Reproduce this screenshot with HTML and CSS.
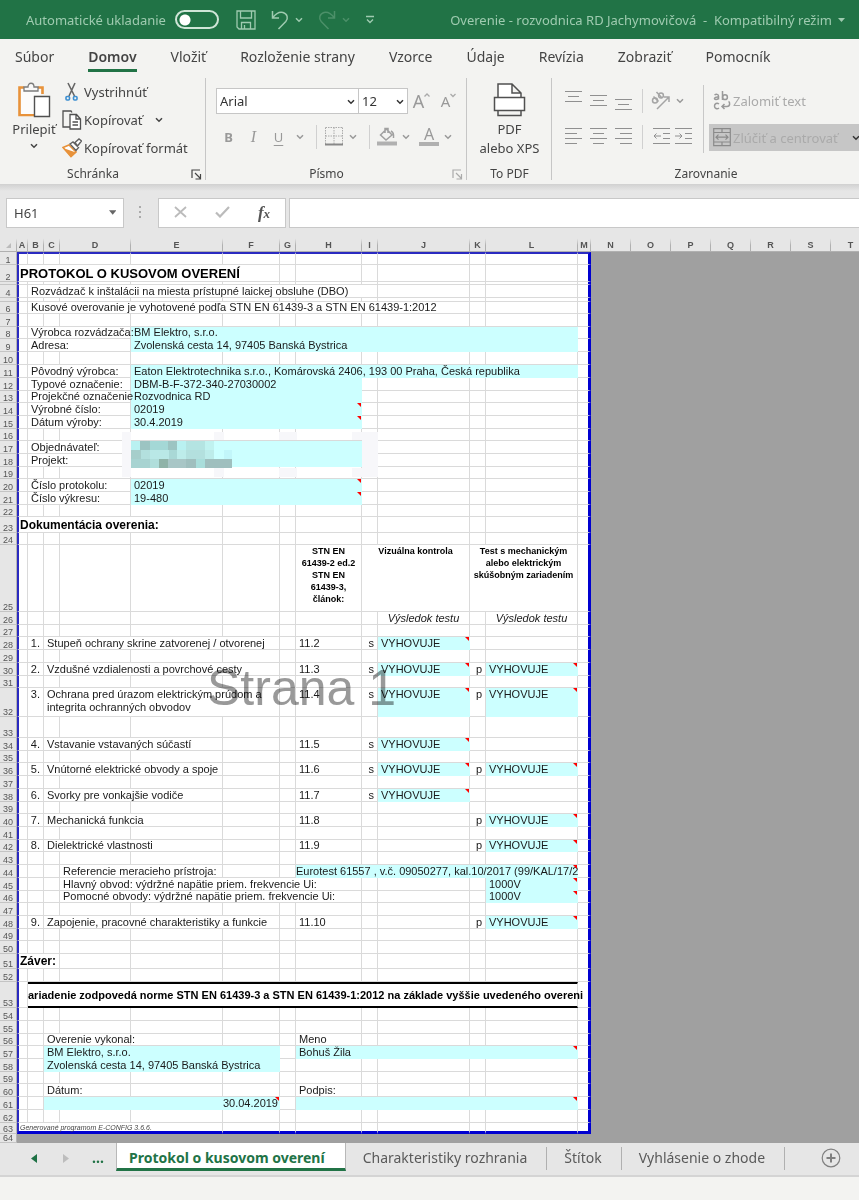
FILE: index.html
```html
<!DOCTYPE html>
<html lang="sk">
<head>
<meta charset="utf-8">
<title>Overenie - rozvodnica RD Jachymovičová</title>
<link rel="stylesheet" href="styles.css">
</head>
<body>
<svg class="defs" aria-hidden="true">
  <symbol id="chev" viewBox="0 0 8 6"><path d="M1 1.200l3 3 3-3" fill="none" stroke="currentColor" stroke-width="1.500"/></symbol>
  <symbol id="launch" viewBox="0 0 11 11"><path d="M1 9V1h8M4 4l5 5M9.500 5v5h-5" fill="none" stroke="currentColor" stroke-width="1.200"/></symbol>
</svg>

<header class="titlebar">
  <label class="autosave">Automatické ukladanie <input type="checkbox" class="switch"></label>
  <button class="tool" aria-label="Uložiť"><svg width="20" height="20" viewBox="0 0 20 20" fill="none" stroke="currentColor" stroke-width="1.300"><path d="M1 1h18v18H3l-2-2zM4.500 1v7h11V1M5.500 19v-6.500h9V19M8.500 19v-4"/></svg></button>
  <button class="tool" aria-label="Späť"><svg width="18" height="20" viewBox="0 0 18 20" fill="none" stroke="currentColor" stroke-width="1.500"><path d="M1.500 1v7H8M1.800 7.600C5 3.500 8.500 1.500 12 2.500c4.500 1.300 5.500 6 2.800 9L7.500 19"/></svg><svg width="8" height="6"><use href="#chev"/></svg></button>
  <button class="tool dim" aria-label="Znova"><svg width="18" height="20" viewBox="0 0 18 20" fill="none" stroke="currentColor" stroke-width="1.500"><path d="M16.500 1v7H10M16.200 7.600C13 3.500 9.500 1.500 6 2.500c-4.500 1.300-5.500 6-2.800 9l7.300 7.500"/></svg><svg width="8" height="6"><use href="#chev"/></svg></button>
  <button class="tool" aria-label="Prispôsobiť panel"><svg width="10" height="10" viewBox="0 0 10 10" fill="none" stroke="currentColor" stroke-width="1.400"><path d="M1 1.500h8M2 4.500l3 3 3-3"/></svg></button>
  <div class="doc">Overenie - rozvodnica RD Jachymovičová &nbsp;-&nbsp; Kompatibilný režim <svg width="7" height="4" viewBox="0 0 7 4"><path d="M0 0h7L3.500 4z" fill="currentColor"/></svg></div>
</header>

<nav class="tabs">
  <a href="#">Súbor</a><a href="#" class="on">Domov</a><a href="#">Vložiť</a><a href="#">Rozloženie strany</a><a href="#">Vzorce</a><a href="#">Údaje</a><a href="#">Revízia</a><a href="#">Zobraziť</a><a href="#">Pomocník</a>
</nav>

<section class="ribbon">
  <div class="group clip">
    <div class="body">
      <button class="big">
        <svg width="34" height="36" viewBox="0 0 34 36" fill="none"><path d="M7 5.500H2.500V33H17M21 5.500h4.500V12" stroke="#e8923a" stroke-width="2.600"/><path d="M4 7h20v6h-7v19H4z" fill="#fcfcfc"/><path d="M7 9V5h4c0-5 6-5 6 0h4v4z" fill="#f8f8f8" stroke="#7b7b7b" stroke-width="1.300"/><path d="M17.500 14.500h15v20h-15z" fill="#fff" stroke="#505050" stroke-width="1.400"/></svg>
        <span>Prilepiť</span>
        <svg width="8" height="6"><use href="#chev"/></svg>
      </button>
      <div class="stack">
        <button><svg width="20" height="20" viewBox="0 0 20 20" fill="none"><path d="M6 1l6.500 13M13 1L7 14" stroke="#666" stroke-width="1.600"/><rect x="4" y="14.500" width="3.500" height="3.500" rx="1" stroke="#3d8fd1" stroke-width="1.600"/><rect x="11.500" y="14.500" width="3.500" height="3.500" rx="1" stroke="#3d8fd1" stroke-width="1.600"/></svg>Vystrihnúť</button>
        <button><svg width="20" height="20" viewBox="0 0 20 20" fill="none" stroke="#505050" stroke-width="1.300"><path d="M8 17H1V1h8l1 1.500"/><path d="M8 4.500h6.500L18.500 9v10H8zM14 4.500V9h4.500M10.500 12h5.500M10.500 15h5.500" fill="#fff"/></svg>Kopírovať <svg class="after" width="8" height="6"><use href="#chev"/></svg></button>
        <button><svg width="20" height="20" viewBox="0 0 20 20"><path d="M1 9.500l6-2.500 7 7-5 4.500z" fill="#fff" stroke="#e8923a" stroke-width="1.600"/><path d="M1 10l13 4.500L9 19z" fill="#e8923a"/><path d="M8 6l3-2 5.500 5.500-2.500 3zM13 4.500L17 1l2.500 2-4 5z" fill="#fff" stroke="#606060" stroke-width="1.400"/></svg>Kopírovať formát</button>
      </div>
    </div>
    <div class="cap">Schránka<button class="launch" aria-label="Možnosti schránky"><svg width="11" height="11"><use href="#launch"/></svg></button></div>
  </div>

  <div class="group font">
    <div class="body rows">
      <div class="row">
        <span class="combo name"><select aria-label="Písmo"><option>Arial</option></select><svg width="8" height="6"><use href="#chev"/></svg></span>
        <span class="combo size"><select aria-label="Veľkosť písma"><option>12</option></select><svg width="8" height="6"><use href="#chev"/></svg></span>
        <button class="ib grow" aria-label="Zväčšiť písmo"><span class="a-lg">A</span><svg width="6" height="18" viewBox="0 0 6 18"><path d="M.5 4.500L3 2l2.500 2.500" fill="none" stroke="#aaa" stroke-width="1.300"/></svg></button>
        <button class="ib grow" aria-label="Zmenšiť písmo"><span class="a-sm">A</span><svg width="6" height="18" viewBox="0 0 6 18"><path d="M.5 2L3 4.500 5.500 2" fill="none" stroke="#aaa" stroke-width="1.300"/></svg></button>
      </div>
      <div class="row">
        <button class="ib b">B</button><button class="ib i">I</button><button class="ib u">U</button><button class="dd" aria-label="Štýly podčiarknutia"><svg width="8" height="6"><use href="#chev"/></svg></button>
        <i class="sep"></i>
        <button class="ic" aria-label="Orámovanie"><svg width="18" height="19" viewBox="0 0 18 19" fill="none" stroke="#aaa"><path d="M.5.500v17M17.500.500v17M.5.500h17M9 .5v17M.5 9h17" stroke-dasharray="1.500 1"/><path d="M0 17.500h18" stroke="#888" stroke-width="2"/></svg></button><button class="dd" aria-label="Typ orámovania"><svg width="8" height="6"><use href="#chev"/></svg></button>
        <i class="sep"></i>
        <button class="ic" aria-label="Farba výplne"><svg width="20" height="19" viewBox="0 0 20 19" fill="none"><path d="M3.500 8l6-6 5.500 6-6 5zM8 6V1.500h3V6M14 4c2 1 3 3 2.500 7" stroke="#a0a0a0" stroke-width="1.500"/><path d="M0 14.500h20v4H0z" fill="#b0b0b0"/></svg></button><button class="dd" aria-label="Farby výplne"><svg width="8" height="6"><use href="#chev"/></svg></button>
        <button class="ic color" aria-label="Farba písma"><span>A</span></button><button class="dd" aria-label="Farby písma"><svg width="8" height="6"><use href="#chev"/></svg></button>
      </div>
    </div>
    <div class="cap">Písmo<button class="launch dim" aria-label="Možnosti písma"><svg width="11" height="11"><use href="#launch"/></svg></button></div>
  </div>

  <div class="group pdf">
    <div class="body">
      <button class="big">
        <svg width="34" height="36" viewBox="0 0 34 36" fill="#fff" stroke="#505050" stroke-width="1.500"><path d="M5 15V2h14l9 9v4M19 2v9h9"/><path d="M1.500 15.500h30v13h-30z"/><path d="M5 29v4.500h23V29" fill="none"/></svg>
        <span>PDF<br>alebo XPS</span>
      </button>
    </div>
    <div class="cap">To PDF</div>
  </div>

  <div class="group align">
    <div class="body">
      <div class="rows">
        <div class="row">
          <button class="ib" aria-label="Zarovnať hore"><svg width="17" height="20" stroke="#909090"><path d="M0 .5h17M3 5.500h11M0 10.500h17"/></svg></button><button class="ib" aria-label="Zarovnať na stred zvisle"><svg width="17" height="20" stroke="#909090"><path d="M0 4.500h17M3 9.500h11M0 14.500h17"/></svg></button><button class="ib" aria-label="Zarovnať dole"><svg width="17" height="20" stroke="#909090"><path d="M0 8.500h17M3 13.500h11M0 18.500h17"/></svg></button>
          <i class="sep"></i>
          <button class="ic" aria-label="Orientácia"><svg width="20" height="20" viewBox="0 0 20 20" fill="none" stroke="#a5a5a5" stroke-width="1.500"><circle cx="4" cy="9.500" r="2.500"/><path d="M2.500 5.500l5 5M5.500 1l5.500 6"/><circle cx="10" cy="4.500" r="2.400"/><path d="M6 18L18 6M13 6h5v5"/></svg></button><button class="dd" aria-label="Typ orientácie"><svg width="8" height="6"><use href="#chev"/></svg></button>
        </div>
        <div class="row">
          <button class="ib" aria-label="Zarovnať vľavo"><svg width="17" height="17" stroke="#909090"><path d="M0 .5h17M0 5.500h12M0 10.500h17M0 15.500h12"/></svg></button><button class="ib" aria-label="Centrovať"><svg width="17" height="17" stroke="#909090"><path d="M0 .5h17M3 5.500h11M0 10.500h17M3 15.500h11"/></svg></button><button class="ib" aria-label="Zarovnať vpravo"><svg width="17" height="17" stroke="#909090"><path d="M0 .5h17M5 5.500h12M0 10.500h17M5 15.500h12"/></svg></button>
          <i class="sep"></i>
          <button class="ic" aria-label="Zmenšiť zarážku"><svg width="17" height="17" fill="none" stroke="#909090"><path d="M0 .5h17M10 5.500h7M10 10.500h7M0 15.500h17M8 8H1M3.500 5.500L1 8l2.500 2.500"/></svg></button><button class="ib" aria-label="Zväčšiť zarážku"><svg width="17" height="17" fill="none" stroke="#909090"><path d="M0 .5h17M10 5.500h7M10 10.500h7M0 15.500h17M0 8h7M4.500 5.500L7 8l-2.500 2.500"/></svg></button>
        </div>
      </div>
      <div class="rows wrapcol">
        <button class="wide"><svg width="18" height="20" viewBox="0 0 18 20" fill="none" stroke="#999" stroke-width="1.500"><path d="M1.500 4C3 3 5.500 3 5.500 5v3.500M5.500 6C1 5.500.500 8.500 3 8.500c1.500 0 2.500-1 2.500-2M9.500 0v9"/><circle cx="12" cy="6.200" r="2.400"/><path d="M6 13c-2-1.500-4.500-.500-4.500 2s2.500 3.500 4.500 2M9 15.500h5c3.500 0 3-4.500 1.500-5M11.500 13L9 15.500l2.500 2.500"/></svg>Zalomiť text</button>
        <button class="wide merge"><svg width="18" height="19" viewBox="0 0 18 19" fill="none" stroke="#8a8a8a" stroke-width="1.200"><path d="M.7.700h16.600v17H.7zM.7 4.500h16.600M.7 14h16.600M9 .7v3.800M9 14v3.700M3 9.200h12M5.500 6.700L3 9.200l2.500 2.500M12.500 6.700L15 9.200l-2.500 2.500"/></svg>Zlúčiť a centrovať<svg class="dark" width="8" height="6"><use href="#chev"/></svg></button>
      </div>
    </div>
    <div class="cap">Zarovnanie</div>
  </div>
</section>

<section class="formula">
  <div class="namebox"><input aria-label="Pole názvov" value="H61"><svg width="8" height="5" viewBox="0 0 8 5"><path d="M0 0h8L4 5z" fill="#666"/></svg></div>
  <svg class="dots" width="3" height="13" viewBox="0 0 3 13" fill="#aaa"><path d="M0 0h2v2H0zM0 5h2v2H0zM0 10h2v2H0z"/></svg>
  <div class="fx">
    <button aria-label="Zrušiť"><svg width="13" height="12" viewBox="0 0 13 12"><path d="M1 1l11 10M12 1L1 11" stroke="#bbb" stroke-width="1.800"/></svg></button>
    <button aria-label="Zadať"><svg width="15" height="12" viewBox="0 0 15 12"><path d="M1 6.500l4 4L14 1" fill="none" stroke="#bbb" stroke-width="2.200"/></svg></button>
    <button class="fn">f<small>x</small></button>
  </div>
  <input class="bar" aria-label="Riadok vzorcov">
</section>

<main class="sheet">
<table>
<colgroup><col class="hd"><col class="n11"><col class="n16"><col class="n16"><col class="n71"><col class="n92"><col class="n57"><col class="n16"><col class="n66"><col class="n16"><col class="n92"><col class="n16"><col class="n92"><col class="n13"><col class="n40"><col class="n40"><col class="n40"><col class="n40"><col class="n40"><col class="n40"><col class="n40"><col></colgroup>
<thead><tr><th class="corner"><svg width="5" height="5"><path d="M5 0v5H0z" fill="#bbb"/></svg></th><th>A</th><th>B</th><th>C</th><th>D</th><th>E</th><th>F</th><th>G</th><th>H</th><th>I</th><th>J</th><th>K</th><th>L</th><th>M</th><th>N</th><th>O</th><th>P</th><th>Q</th><th>R</th><th>S</th><th>T</th><th></th></tr></thead>
<tbody>
<tr class="top"><th>1</th><td><td><td><td><td><td><td><td><td><td><td><td><td class="end"><td class="void" colspan="8" rowspan="64"></tr>
<tr class="h17"><th>2</th><td colspan="6" class="h1">PROTOKOL O KUSOVOM OVERENÍ<td><td><td><td><td><td><td></tr>
<tr class="h3"><th></th><td><td><td><td><td><td><td><td><td><td><td><td><td></tr>
<tr><th>4</th><td><td colspan="8">Rozvádzač k inštalácii na miesta prístupné laickej obsluhe (DBO)<td><td><td><td></tr>
<tr class="h4"><th></th><td><td><td><td><td><td><td><td><td><td><td><td><td></tr>
<tr class="h12"><th>6</th><td><td colspan="9">Kusové overovanie je vyhotovené podľa STN EN 61439-3 a STN EN 61439-1:2012<td><td><td></tr>
<tr><th>7</th><td><td><td><td><td><td><td><td><td><td><td><td><td></tr>
<tr class="h12"><th>8</th><td><td colspan="3">Výrobca rozvádzača:<td class="c" colspan="8">BM Elektro, s.r.o.<td></tr>
<tr><th>9</th><td><td colspan="3">Adresa:<td class="c" colspan="8">Zvolenská cesta 14, 97405 Banská Bystrica<td></tr>
<tr><th>10</th><td><td><td><td><td><td><td><td><td><td><td><td><td></tr>
<tr><th>11</th><td><td colspan="3">Pôvodný výrobca:<td class="c" colspan="8">Eaton Elektrotechnika s.r.o., Komárovská 2406, 193 00 Praha, Česká republika<td></tr>
<tr><th>12</th><td><td colspan="3">Typové označenie:<td class="c" colspan="4">DBM-B-F-372-340-27030002<td><td><td><td><td></tr>
<tr class="h12"><th>13</th><td><td colspan="3">Projekčné označenie<td class="c" colspan="4">Rozvodnica RD<td><td><td><td><td></tr>
<tr><th>14</th><td><td colspan="3">Výrobné číslo:<td class="c note" colspan="4">02019<td><td><td><td><td></tr>
<tr><th>15</th><td><td colspan="3">Dátum výroby:<td class="c note" colspan="4">30.4.2019<td><td><td><td><td></tr>
<tr class="h12"><th>16</th><td><td><td><td><td><td><td><td><td><td><td><td><td></tr>
<tr><th>17</th><td><td colspan="3">Objednávateľ:<td class="c hidden" colspan="4" rowspan="2"><svg class="mosaic" width="256" height="45" viewBox="0 0 256 45"><g fill="#f7f7fa"><path d="M0 0h9v45H0zM92 0h10v8H92zM157 0h18v8h-18zM230 0h26v8h-26zM92 36h10v9H92zM157 36h18v9h-18zM230 36h26v9h-26zM240 8h16v28h-16z"/></g><path d="M9 9h9v9H9zM55 9h9v9h-9z" fill="#b9f1f1"/><path d="M18 9h10v9H18zM46 9h9v9h-9z" fill="#9cc4c2"/><path d="M28 9h18v9H28z" fill="#a4d8d6"/><path d="M64 9h19v9H64z" fill="#b4e4e2"/><path d="M83 9h9v9h-9z" fill="#c0f2f0"/><path d="M9 18h10v9H9z" fill="#a6cecb"/><path d="M19 18h9v9h-9zM64 18h19v9H64z" fill="#b3e0de"/><path d="M28 18h19v9H28z" fill="#b9e8e6"/><path d="M47 18h8v9h-8z" fill="#a9d8d6"/><path d="M55 18h9v9h-9zM83 18h9v9h-9z" fill="#bdecea"/><path d="M102 18h8v9h-8z" fill="#c2f6fa"/><path d="M9 27h19v9H9z" fill="#a7d3d1"/><path d="M28 27h9v9h-9z" fill="#b0dedb"/><path d="M37 27h9v9h-9z" fill="#8fb3a8"/><path d="M46 27h18v9H46z" fill="#a8c6c6"/><path d="M64 27h10v9H64zM83 27h27v9H83z" fill="#9fbfbe"/><path d="M74 27h9v9h-9z" fill="#a9dedb"/></svg><td><td><td><td><td></tr>
<tr><th>18</th><td><td colspan="3">Projekt:<td><td><td><td><td></tr>
<tr class="h12"><th>19</th><td><td><td><td><td><td><td><td><td><td><td><td><td></tr>
<tr><th>20</th><td><td colspan="3">Číslo protokolu:<td class="c note" colspan="4">02019<td><td><td><td><td></tr>
<tr><th>21</th><td><td colspan="3">Číslo výkresu:<td class="c note" colspan="4">19-480<td><td><td><td><td></tr>
<tr class="h12"><th>22</th><td><td><td><td><td><td><td><td><td><td><td><td><td></tr>
<tr class="h16"><th>23</th><td colspan="5" class="h2">Dokumentácia overenia:<td><td><td><td><td><td><td><td></tr>
<tr class="h12"><th>24</th><td><td><td><td><td><td><td><td><td><td><td><td><td></tr>
<tr class="h67"><th>25</th><td><td><td><td><td><td><td><td class="colh">STN EN<br>61439-2 ed.2<br>STN EN<br>61439-3,<br>článok:<td class="colh" colspan="2">Vizuálna kontrola<td class="colh" colspan="2">Test s mechanickým<br>alebo elektrickým<br>skúšobným zariadením<td></tr>
<tr><th>26</th><td><td><td><td><td><td><td><td><td><td class="res">Výsledok testu<td><td class="res">Výsledok testu<td></tr>
<tr class="h12"><th>27</th><td><td><td><td><td><td><td><td><td><td><td><td><td></tr>
<tr><th>28</th><td><td class="num">1.<td colspan="4">Stupeň ochrany skrine zatvorenej / otvorenej<td><td>11.2<td class="num">s<td class="c note">VYHOVUJE<td><td><td></tr>
<tr><th>29</th><td><td><td><td><td><td><td><td><td><td><td><td><td></tr>
<tr><th>30</th><td><td class="num">2.<td colspan="4">Vzdušné vzdialenosti a povrchové cesty<td><td>11.3<td class="num">s<td class="c note">VYHOVUJE<td class="num">p<td class="c note">VYHOVUJE<td></tr>
<tr class="h12"><th>31</th><td><td><td><td><td><td><td><td><td><td><td><td><td></tr>
<tr class="h29"><th>32</th><td><td class="num">3.<td colspan="4">Ochrana pred úrazom elektrickým prúdom a<br>integrita ochranných obvodov<td><td>11.4<td class="num">s<td class="c note">VYHOVUJE<td class="num">p<td class="c note">VYHOVUJE<td></tr>
<tr class="h21"><th>33</th><td><td><td><td><td><td><td><td><td><td><td><td><td></tr>
<tr><th>34</th><td><td class="num">4.<td colspan="3">Vstavanie vstavaných súčastí<td><td><td>11.5<td class="num">s<td class="c note">VYHOVUJE<td><td><td></tr>
<tr class="h12"><th>35</th><td><td><td><td><td><td><td><td><td><td><td><td><td></tr>
<tr><th>36</th><td><td class="num">5.<td colspan="3">Vnútorné elektrické obvody a spoje<td><td><td>11.6<td class="num">s<td class="c note">VYHOVUJE<td class="num">p<td class="c note">VYHOVUJE<td></tr>
<tr><th>37</th><td><td><td><td><td><td><td><td><td><td><td><td><td></tr>
<tr><th>38</th><td><td class="num">6.<td colspan="3">Svorky pre vonkajšie vodiče<td><td><td>11.7<td class="num">s<td class="c note">VYHOVUJE<td><td><td></tr>
<tr class="h12"><th>39</th><td><td><td><td><td><td><td><td><td><td><td><td><td></tr>
<tr><th>40</th><td><td class="num">7.<td colspan="3">Mechanická funkcia<td><td><td>11.8<td><td><td class="num">p<td class="c note">VYHOVUJE<td></tr>
<tr><th>41</th><td><td><td><td><td><td><td><td><td><td><td><td><td></tr>
<tr class="h12"><th>42</th><td><td class="num">8.<td colspan="3">Dielektrické vlastnosti<td><td><td>11.9<td><td><td class="num">p<td class="c note">VYHOVUJE<td></tr>
<tr><th>43</th><td><td><td><td><td><td><td><td><td><td><td><td><td></tr>
<tr><th>44</th><td><td><td><td colspan="2">Referencie meracieho prístroja:<td><td><td class="c note tight" colspan="5">Eurotest 61557 , v.č. 09050277, kal.10/2017 (99/KAL/17/2<td></tr>
<tr><th>45</th><td><td><td><td colspan="5">Hlavný obvod: výdržné napätie priem. frekvencie Ui:<td><td><td><td class="c note">1000V<td></tr>
<tr class="h12"><th>46</th><td><td><td><td colspan="5">Pomocné obvody: výdržné napätie priem. frekvencie Ui:<td><td><td><td class="c note">1000V<td></tr>
<tr><th>47</th><td><td><td><td><td><td><td><td><td><td><td><td><td></tr>
<tr><th>48</th><td><td class="num">9.<td colspan="4">Zapojenie, pracovné charakteristiky a funkcie<td><td>11.10<td><td><td class="num">p<td class="c note">VYHOVUJE<td></tr>
<tr class="h12"><th>49</th><td><td><td><td><td><td><td><td><td><td><td><td><td></tr>
<tr><th>50</th><td><td><td><td><td><td><td><td><td><td><td><td><td></tr>
<tr class="h15"><th>51</th><td colspan="3" class="h2">Záver:<td><td><td><td><td><td><td><td><td><td></tr>
<tr><th>52</th><td><td><td><td><td><td><td><td><td><td><td><td><td></tr>
<tr class="h26"><th>53</th><td><td colspan="11" class="verdict">ariadenie zodpovedá norme STN EN 61439-3 a STN EN 61439-1:2012 na základe vyššie uvedeného overeni<td></tr>
<tr><th>54</th><td><td><td><td><td><td><td><td><td><td><td><td><td></tr>
<tr><th>55</th><td><td><td><td><td><td><td><td><td><td><td><td><td></tr>
<tr class="h12"><th>56</th><td><td><td colspan="2">Overenie vykonal:<td><td><td><td>Meno<td><td><td><td><td></tr>
<tr><th>57</th><td><td><td class="c" colspan="4">BM Elektro, s.r.o.<td><td class="c note" colspan="5">Bohuš Žila<td></tr>
<tr><th>58</th><td><td><td class="c" colspan="4">Zvolenská cesta 14, 97405 Banská Bystrica<td><td><td><td><td><td><td></tr>
<tr class="h12"><th>59</th><td><td><td><td><td><td><td><td><td><td><td><td><td></tr>
<tr><th>60</th><td><td><td colspan="2">Dátum:<td><td><td><td>Podpis:<td><td><td><td><td></tr>
<tr><th>61</th><td><td><td class="c note right" colspan="4">30.04.2019<td><td class="c note" colspan="5"><td></tr>
<tr><th>62</th><td><td><td><td><td><td><td><td><td><td><td><td><td></tr>
<tr class="last"><th>63</th><td class="gen" colspan="5">Generované programom E-CONFIG 3.6.6.<td><td><td><td><td><td><td><td class="end"></tr>
<tr class="h9"><th>64</th><td class="void" colspan="13"></tr>
</tbody>
</table>
<div class="watermark">Strana 1</div>
</main>

<footer>
  <nav class="sheets">
    <button aria-label="Predchádzajúci hárok"><svg width="6" height="9"><path d="M6 0v9L0 4.500z" fill="#1e7145"/></svg></button>
    <button aria-label="Ďalší hárok"><svg width="6" height="9"><path d="M0 0v9l6-4.500z" fill="#bdbdbd"/></svg></button>
    <button class="more">...</button>
    <a href="#" class="on">Protokol o kusovom overení</a><a href="#">Charakteristiky rozhrania</a><a href="#">Štítok</a><a href="#">Vyhlásenie o zhode</a>
    <button class="add" aria-label="Nový hárok"><svg width="20" height="20" viewBox="0 0 20 20" fill="none" stroke="#808080"><circle cx="10" cy="10" r="8.800" stroke-width="1.200"/><path d="M10 5.500v9M5.500 10h9" stroke-width="2"/></svg></button>
  </nav>
</footer>
</body>
</html>
```
FILE: styles.css
```css
* { box-sizing: border-box; }
body {
  margin: 0;
  min-height: 100vh;
  background: #f3f3f1;
  color: #444;
  font: 13px "Noto Sans", "Open Sans", sans-serif;
  overflow-x: hidden;
}
button, input, select { font: inherit; color: inherit; border: 0; background: none; padding: 0; margin: 0; }
a { color: inherit; text-decoration: none; }
.defs { display: none; }

/* Title bar */
.titlebar {
  display: flex;
  align-items: center;
  height: 39px;
  padding: 0 14px 0 26px;
  background: #217346;
  color: #9fcbb0;
  white-space: nowrap;
}
.autosave { display: flex; align-items: center; gap: 9px; margin-right: 17px; }
.switch {
  appearance: none;
  width: 44px;
  height: 19px;
  border: 2px solid #cfe5d7;
  border-radius: 10px;
  background: radial-gradient(circle at 8px 8px, #fff 5px, transparent 6px);
}
.tool { display: flex; align-items: center; gap: 6px; margin-right: 15px; }
.tool.dim { color: #4c9069; }
.doc { margin-left: auto; display: flex; align-items: center; gap: 6px; }

/* Ribbon tabs */
.tabs { display: flex; gap: 34px; height: 36px; padding: 6px 15px 0; font-size: 14px; white-space: nowrap; }
.tabs a { height: 27px; line-height: 24px; }
.tabs .on { font-weight: 600; border-bottom: 3px solid #217346; }

/* Ribbon */
.ribbon { display: flex; height: 110px; border-bottom: 1px solid #d2d2d2; white-space: nowrap; overflow: hidden; }
.group { display: flex; flex-direction: column; flex: none; position: relative; }
.group:not(:last-child)::after { content: ""; position: absolute; right: 0; top: 3px; bottom: 4px; width: 1px; background: #c6c6c6; }
.body { display: flex; height: 90px; }
.cap { height: 20px; line-height: 20px; font-size: 12px; text-align: center; position: relative; padding-right: 20px; }
.launch { position: absolute; right: 4px; top: 0; line-height: 0; height: 20px; }
.launch.dim { color: #aaa; }
.clip { width: 206px; }
.font { width: 261px; }
.pdf { width: 85px; }
.pdf .cap { padding: 0; }
.align { flex: 1 0 308px; }
.align .cap { padding: 0; }
.big { display: flex; flex-direction: column; align-items: center; padding-top: 7px; line-height: 19px; }
.clip .big { width: 62px; padding-left: 6px; }
.clip .big span { padding-bottom: 4px; }
.big span { padding-top: 2px; }
.pdf .big { width: 100%; }
.stack { display: flex; flex-direction: column; padding-top: 3px; }
.stack button { display: flex; align-items: center; gap: 2px; height: 28px; }
.after { margin-left: 10px; }
.rows { display: flex; flex-direction: column; gap: 11px; padding-top: 13px; }
.row { display: flex; align-items: center; height: 25px; color: #999; }
.font .rows { padding-left: 10px; }
.combo { position: relative; display: flex; height: 26px; border: 1px solid #c6c6c6; background: #fff; color: #333; }
.combo + .combo { margin-left: -1px; }
.combo select { appearance: none; width: 100%; padding-left: 3px; }
.combo svg { position: absolute; right: 3px; top: 10px; }
.name { width: 143px; }
.size { width: 50px; }
.ib { width: 25px; height: 25px; display: flex; align-items: center; justify-content: center; }
.grow { width: 27px; }
.a-lg { font-size: 18px; line-height: 20px; }
.a-sm { font-size: 15px; line-height: 20px; }
.b { font-weight: 700; }
.i { font-family: "Liberation Serif", serif; font-style: italic; font-size: 16px; }
.u { text-decoration: underline; text-underline-offset: 3px; }
.dd { width: 18px; line-height: 0; }
.ic { width: 20px; line-height: 0; }
.sep { width: 1px; height: 24px; margin: 0 7px; background: #d0d0d0; }
.color { margin-left: 4px; }
.color span { display: block; border-bottom: 4px solid #b0b0b0; font-size: 16px; line-height: 15px; }
.align .body > .rows:first-child { padding-left: 9px; }
.align .sep { margin: 0 8px 0 6px; }
.wrapcol { position: relative; flex: 1; padding-left: 6px; margin-left: 7px; }
.wrapcol::before { content: ""; position: absolute; left: 0; top: 10px; height: 68px; width: 1px; background: #c8c8c8; }
.wide { display: flex; align-items: center; gap: 2px; height: 25px; padding-left: 4px; color: #aaa; }
.merge { height: 27px; background: #c6c6c6; color: #aaa; }
.dark { margin-left: 12px; color: #333; flex: none; }

/* Formula bar */
.formula {
  display: flex;
  align-items: center;
  height: 51px;
  padding: 4px 0 0 6px;
  background: linear-gradient(#d4d4d4, #e6e6e6 6px);
}
.namebox, .fx, .bar { height: 30px; border: 1px solid #c8c8c8; background: #fff; }
.namebox { display: flex; align-items: center; width: 118px; padding: 0 7px; }
.namebox input { width: 100%; }
.dots { margin: 0 16px 0 15px; flex: none; }
.fx { display: flex; width: 128px; margin-right: 3px; }
.fx button { flex: 1; }
.fn { font: italic bold 17px "Liberation Serif", serif; color: #555; }
.fn small { font-size: 13px; }
.bar { flex: 1; min-width: 0; border-right: 0; padding: 0 6px; }

/* Worksheet */
.sheet { position: relative; overflow: hidden; background: #a0a0a0; }
table {
  width: 100%;
  min-width: 871px;
  table-layout: fixed;
  border-collapse: separate;
  border-spacing: 0;
  font: 11px/11px "Liberation Sans", Arial, sans-serif;
  color: #1a1a1a;
}
.hd { width: 17px; }
.n11 { width: 11px; }
.n13 { width: 13px; }
.n16 { width: 16px; }
.n40 { width: 40px; }
.n57 { width: 57px; }
.n66 { width: 66px; }
.n71 { width: 71px; }
.n92 { width: 92px; }
th {
  padding: 0;
  background: #e6e6e6;
  color: #555;
  font-weight: 400;
  font-size: 9px;
  line-height: 8px;
  border-right: 1px solid #b5b5b5;
  border-bottom: 1px solid #c4c4c4;
  vertical-align: bottom;
}
thead th { height: 16px; font-weight: 700; vertical-align: middle; padding-top: 3px; border-image: linear-gradient(#e6e6e6 20%, #b0b0b0 60%) 1; }
td {
  height: 13px;
  padding: 0 0 0 3px;
  background: #fff;
  border-right: 1px solid #dadada;
  border-bottom: 1px solid #dadada;
  white-space: nowrap;
  vertical-align: bottom;
}
.h3 td { height: 3px; }
.h4 td { height: 4px; }
.h9 td, .h9 th { height: 9px; }
.h12 td { height: 12px; }
.h15 td { height: 15px; }
.h16 td { height: 16px; }
.h17 td { height: 17px; }
.h21 td { height: 21px; }
.h26 td { height: 26px; }
.h29 td { height: 29px; line-height: 13px; vertical-align: top; }
.h67 td { height: 67px; }
tbody th + td { border-left: 2px solid #2a2ac0; padding-left: 1px; }
tbody tr:not(.top):not(.h9) td:last-child, td.end { border-right: 3px solid #0000d0; }
.top td { border-top: 2px solid #2a2ac0; }
.last td { height: 11px; border-bottom: 3px solid #0000d0; }
tbody tr td.void { height: auto; border: 0; background: #a0a0a0; }
td.c { background: #cff; border-color: #cff; }
.note { position: relative; }
.note::after { content: ""; position: absolute; right: 0; top: 0; border: 2px solid; border-color: #f00 #f00 transparent transparent; }
td.tight { padding-left: 0; }
td.right { text-align: right; padding-right: 1px; }
td.num { text-align: right; padding: 0 3px 0 0; }
.hidden { position: relative; }
.mosaic { position: absolute; left: -9px; top: -9px; }
td.h1 { font-size: 13px; line-height: 14px; font-weight: 700; color: #000; }
td.h2 { font-size: 12px; font-weight: 700; color: #000; line-height: 13px; }
td.colh { font-size: 9px; line-height: 12px; font-weight: 700; text-align: center; vertical-align: top; padding: 0; color: #000; }
td.res { font-style: italic; text-align: center; padding: 0; }
td.verdict {
  padding: 0;
  font-weight: 700;
  color: #000;
  vertical-align: middle;
  border-top: 2px solid #000;
  border-bottom: 2px solid #000;
}
td.gen { font-size: 7px; line-height: 7px; font-style: italic; color: #444; }
.watermark {
  position: absolute;
  left: 207px;
  top: 427px;
  font: 50px/50px "Liberation Sans", Arial, sans-serif;
  color: #999;
  mix-blend-mode: multiply;
  pointer-events: none;
}

/* Sheet tabs */
.sheets {
  display: flex;
  align-items: flex-start;
  height: 34px;
  background: #e6e6e6;
  border-bottom: 2px solid #d4d4d4;
  padding-left: 20px;
  font-size: 14px;
  white-space: nowrap;
  color: #5a5a5a;
}
.sheets button { height: 30px; width: 32px; line-height: 0; padding-right: 4px; }
.sheets .more { color: #217346; font-weight: 700; line-height: 30px; }
.sheets a { line-height: 30px; padding: 0 20px 0 17px; position: relative; }
.sheets a:not(.on)::after { content: ""; position: absolute; right: 0; top: 4px; height: 23px; width: 1px; background: #b0b0b0; }
.sheets .on { height: 28px; padding: 0 20px 0 12px; background: #fff; color: #217346; font-weight: 700; border: 1px solid #b8b8b8; border-width: 0 1px; border-bottom: 3px solid #217346; }
.sheets .add { margin-left: 32px; }
```
